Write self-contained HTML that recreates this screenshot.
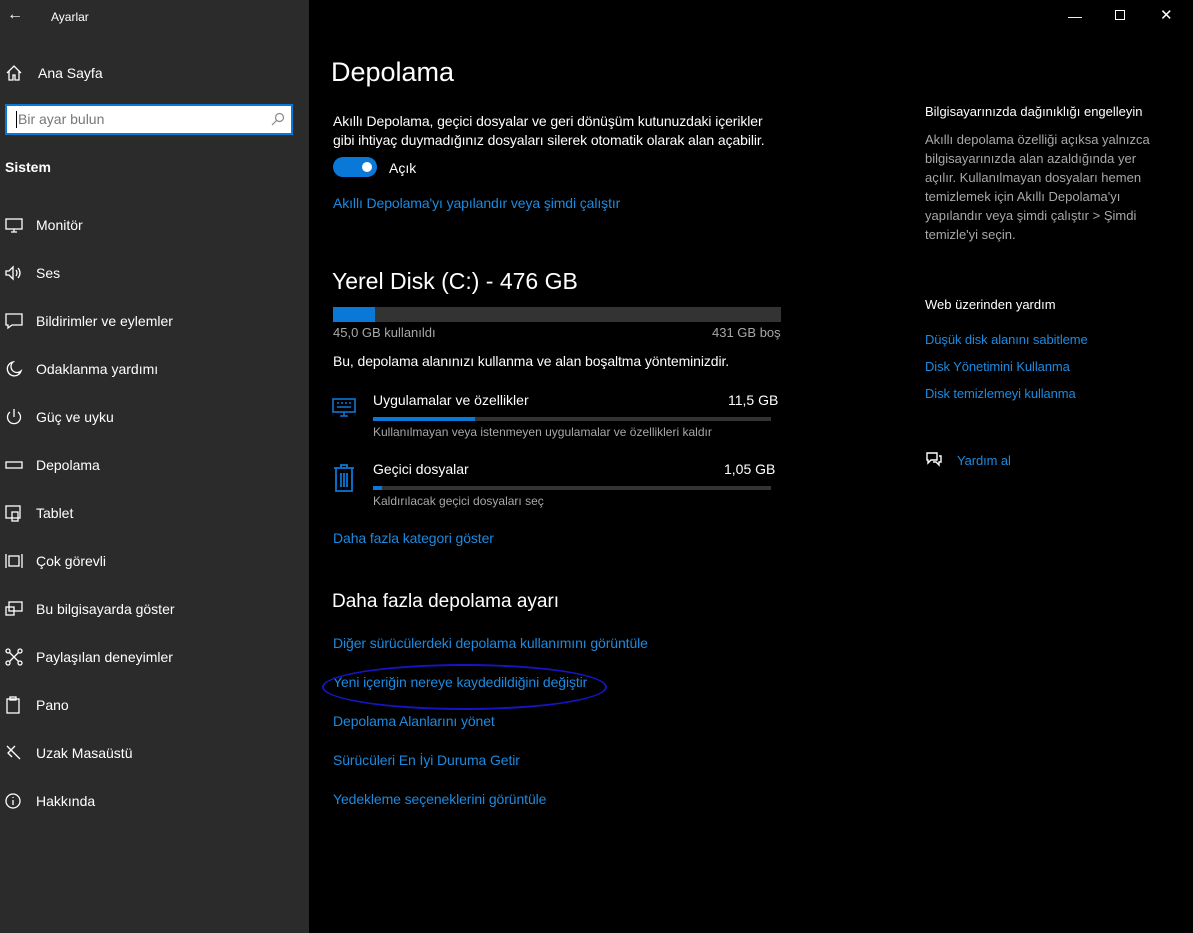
<!DOCTYPE html>
<html><head><meta charset="utf-8"><style>
*{margin:0;padding:0;box-sizing:border-box}
body{width:1193px;height:933px;background:#000;font-family:"Liberation Sans",sans-serif;color:#fff;position:relative;overflow:hidden}
#side{position:absolute;left:0;top:0;width:309px;height:933px;background:#2b2b2b}
.a{position:absolute;white-space:nowrap}
.s{font-size:14px;color:#fff}
.l{color:#1d8ae0;font-size:14px;letter-spacing:-0.1px}
.g{color:#a8a8a8}
svg.i{position:absolute;left:5px;width:18px;height:18px;fill:none;stroke:#fff;stroke-width:1.3}
</style></head><body>
<div id="side">
<div class="a" style="left:7px;top:6px;font-size:16px">←</div>
<div class="a" style="left:51px;top:10px;font-size:12px">Ayarlar</div>
<svg class="i" style="top:64px" viewBox="0 0 18 18"><path d="M2 9 9 2l7 7M4 7v9h4v-5h2v5h4V7"/></svg>
<div class="a s" style="left:38px;top:65px">Ana Sayfa</div>
<div class="a" style="left:5px;top:104px;width:288px;height:31px;background:#fff;border:2px solid #0a78d7"></div>
<div class="a" style="left:16px;top:111px;width:1px;height:17px;background:#000"></div>
<div class="a" style="left:18px;top:111px;font-size:14px;color:#777">Bir ayar bulun</div>
<svg class="a" style="left:271px;top:112px;width:14px;height:14px;fill:none;stroke:#888;stroke-width:1.2" viewBox="0 0 14 14"><circle cx="8.5" cy="5.5" r="4"/><path d="M5.5 8.5 1 13"/></svg>
<div class="a" style="left:5px;top:159px;font-size:14px;font-weight:bold">Sistem</div>
<div class="a s" style="left:36px;top:217px">Monitör</div>
<div class="a s" style="left:36px;top:265px">Ses</div>
<div class="a s" style="left:36px;top:313px">Bildirimler ve eylemler</div>
<div class="a s" style="left:36px;top:361px">Odaklanma yardımı</div>
<div class="a s" style="left:36px;top:409px">Güç ve uyku</div>
<div class="a s" style="left:36px;top:457px">Depolama</div>
<div class="a s" style="left:36px;top:505px">Tablet</div>
<div class="a s" style="left:36px;top:553px">Çok görevli</div>
<div class="a s" style="left:36px;top:601px">Bu bilgisayarda göster</div>
<div class="a s" style="left:36px;top:649px">Paylaşılan deneyimler</div>
<div class="a s" style="left:36px;top:697px">Pano</div>
<div class="a s" style="left:36px;top:745px">Uzak Masaüstü</div>
<div class="a s" style="left:36px;top:793px">Hakkında</div>
<svg class="i" style="top:216px" viewBox="0 0 18 18"><rect x="1" y="3" width="16" height="10"/><path d="M6 16h6M9 13v3"/></svg>
<svg class="i" style="top:264px" viewBox="0 0 18 18"><path d="M1 7h3l4-4v12l-4-4H1zM11 6q2 3 0 6M13 4q4 5 0 10"/></svg>
<svg class="i" style="top:312px" viewBox="0 0 18 18"><path d="M1 2h16v11H7l-4 3v-3H1z"/></svg>
<svg class="i" style="top:360px" viewBox="0 0 18 18"><path d="M8 2a7 7 0 1 0 8 9A6 6 0 0 1 8 2z"/></svg>
<svg class="i" style="top:408px" viewBox="0 0 18 18"><path d="M9 1v8M5 4a6.5 6.5 0 1 0 8 0"/></svg>
<svg class="i" style="top:456px" viewBox="0 0 18 18"><rect x="1" y="6" width="16" height="6"/></svg>
<svg class="i" style="top:504px" viewBox="0 0 18 18"><rect x="1" y="2" width="14" height="12"/><rect x="7" y="8" width="6" height="9"/></svg>
<svg class="i" style="top:552px" viewBox="0 0 18 18"><rect x="4" y="4" width="10" height="10"/><path d="M1 2v14M17 2v14"/></svg>
<svg class="i" style="top:600px" viewBox="0 0 18 18"><rect x="4" y="2" width="13" height="9"/><rect x="1" y="7" width="8" height="8"/></svg>
<svg class="i" style="top:648px" viewBox="0 0 18 18"><circle cx="3" cy="3" r="2"/><circle cx="15" cy="3" r="2"/><circle cx="3" cy="15" r="2"/><circle cx="15" cy="15" r="2"/><path d="M4.5 4.5l9 9M13.5 4.5l-9 9"/></svg>
<svg class="i" style="top:696px" viewBox="0 0 18 18"><rect x="2" y="3" width="12" height="14"/><rect x="5" y="1" width="6" height="3"/></svg>
<svg class="i" style="top:744px" viewBox="0 0 18 18"><path d="M2 2l13 13M10 2l-7 7 4 4"/></svg>
<svg class="i" style="top:792px" viewBox="0 0 18 18"><circle cx="8" cy="9" r="7"/><path d="M8 8v5M8 5v1"/></svg>
</div>
<div class="a" style="left:1068px;top:8px;font-size:14px">—</div>
<div class="a" style="left:1115px;top:10px;width:10px;height:10px;border:1px solid #fff"></div>
<div class="a" style="left:1160px;top:6px;font-size:15px">✕</div>

<div class="a" style="left:331px;top:57px;font-size:27px">Depolama</div>
<div class="a s" style="left:333px;top:112px;line-height:19px;letter-spacing:-0.1px">Akıllı Depolama, geçici dosyalar ve geri dönüşüm kutunuzdaki içerikler<br>gibi ihtiyaç duymadığınız dosyaları silerek otomatik olarak alan açabilir.</div>
<div class="a" style="left:333px;top:157px;width:44px;height:20px;border-radius:10px;background:#0a78d7"></div>
<div class="a" style="left:362px;top:162px;width:10px;height:10px;border-radius:5px;background:#fff"></div>
<div class="a s" style="left:389px;top:160px">Açık</div>
<div class="a l" style="left:333px;top:195px">Akıllı Depolama'yı yapılandır veya şimdi çalıştır</div>
<div class="a" style="left:332px;top:268px;font-size:23px">Yerel Disk (C:) - 476 GB</div>
<div class="a" style="left:333px;top:307px;width:448px;height:15px;background:#333"></div>
<div class="a" style="left:333px;top:307px;width:42px;height:15px;background:#0a78d7"></div>
<div class="a g" style="left:333px;top:325px;font-size:13px">45,0 GB kullanıldı</div>
<div class="a g" style="left:712px;top:325px;font-size:13px">431 GB boş</div>
<div class="a s" style="left:333px;top:353px;letter-spacing:-0.1px">Bu, depolama alanınızı kullanma ve alan boşaltma yönteminizdir.</div>
<svg class="a" style="left:332px;top:398px;width:24px;height:20px;fill:none;stroke:#0a78d7;stroke-width:1.6" viewBox="0 0 24 20"><rect x="1" y="1" width="22" height="13"/><path d="M8 18h8M12 14v4M5 5h2M9 5h2M13 5h2M17 5h2M5 9h14"/></svg>
<div class="a s" style="left:373px;top:392px">Uygulamalar ve özellikler</div>
<div class="a s" style="left:728px;top:392px">11,5 GB</div>
<div class="a" style="left:373px;top:417px;width:398px;height:4px;background:#333"></div>
<div class="a" style="left:373px;top:417px;width:102px;height:4px;background:#0a78d7"></div>
<div class="a g" style="left:373px;top:425px;font-size:12px">Kullanılmayan veya istenmeyen uygulamalar ve özellikleri kaldır</div>
<svg class="a" style="left:332px;top:464px;width:24px;height:30px;fill:none;stroke:#0a78d7;stroke-width:1.8" viewBox="0 0 24 30"><path d="M2 4h20M9 4V1h6v3M4 4v23h16V4M9 9v14M12 9v14M15 9v14"/></svg>
<div class="a s" style="left:373px;top:461px">Geçici dosyalar</div>
<div class="a s" style="left:724px;top:461px">1,05 GB</div>
<div class="a" style="left:373px;top:486px;width:398px;height:4px;background:#333"></div>
<div class="a" style="left:373px;top:486px;width:9px;height:4px;background:#0a78d7"></div>
<div class="a g" style="left:373px;top:494px;font-size:12px">Kaldırılacak geçici dosyaları seç</div>
<div class="a l" style="left:333px;top:530px">Daha fazla kategori göster</div>
<div class="a" style="left:332px;top:591px;font-size:19px">Daha fazla depolama ayarı</div>
<div class="a l" style="left:333px;top:635px">Diğer sürücülerdeki depolama kullanımını görüntüle</div>
<div class="a l" style="left:333px;top:674px">Yeni içeriğin nereye kaydedildiğini değiştir</div>
<div class="a" style="left:322px;top:664px;width:285px;height:46px;border:2px solid #1515c8;border-radius:50%"></div>
<div class="a l" style="left:333px;top:713px">Depolama Alanlarını yönet</div>
<div class="a l" style="left:333px;top:752px">Sürücüleri En İyi Duruma Getir</div>
<div class="a l" style="left:333px;top:791px">Yedekleme seçeneklerini görüntüle</div>

<div class="a" style="left:925px;top:104px;font-size:13px">Bilgisayarınızda dağınıklığı engelleyin</div>
<div class="a g" style="left:925px;top:130px;font-size:13px;line-height:19px">Akıllı depolama özelliği açıksa yalnızca<br>bilgisayarınızda alan azaldığında yer<br>açılır. Kullanılmayan dosyaları hemen<br>temizlemek için Akıllı Depolama'yı<br>yapılandır veya şimdi çalıştır &gt; Şimdi<br>temizle'yi seçin.</div>
<div class="a" style="left:925px;top:297px;font-size:13px">Web üzerinden yardım</div>
<div class="a l" style="left:925px;top:332px;font-size:13px">Düşük disk alanını sabitleme</div>
<div class="a l" style="left:925px;top:359px;font-size:13px">Disk Yönetimini Kullanma</div>
<div class="a l" style="left:925px;top:386px;font-size:13px">Disk temizlemeyi kullanma</div>
<svg class="a" style="left:925px;top:451px;width:18px;height:18px;fill:none;stroke:#fff;stroke-width:1.4" viewBox="0 0 18 18"><path d="M2 2h10v7H6l-3 3V9H2z"/><path d="M8 11h3l3 3v-3h2V5h-2"/></svg>
<div class="a l" style="left:957px;top:453px;font-size:13px">Yardım al</div>
</body></html>
